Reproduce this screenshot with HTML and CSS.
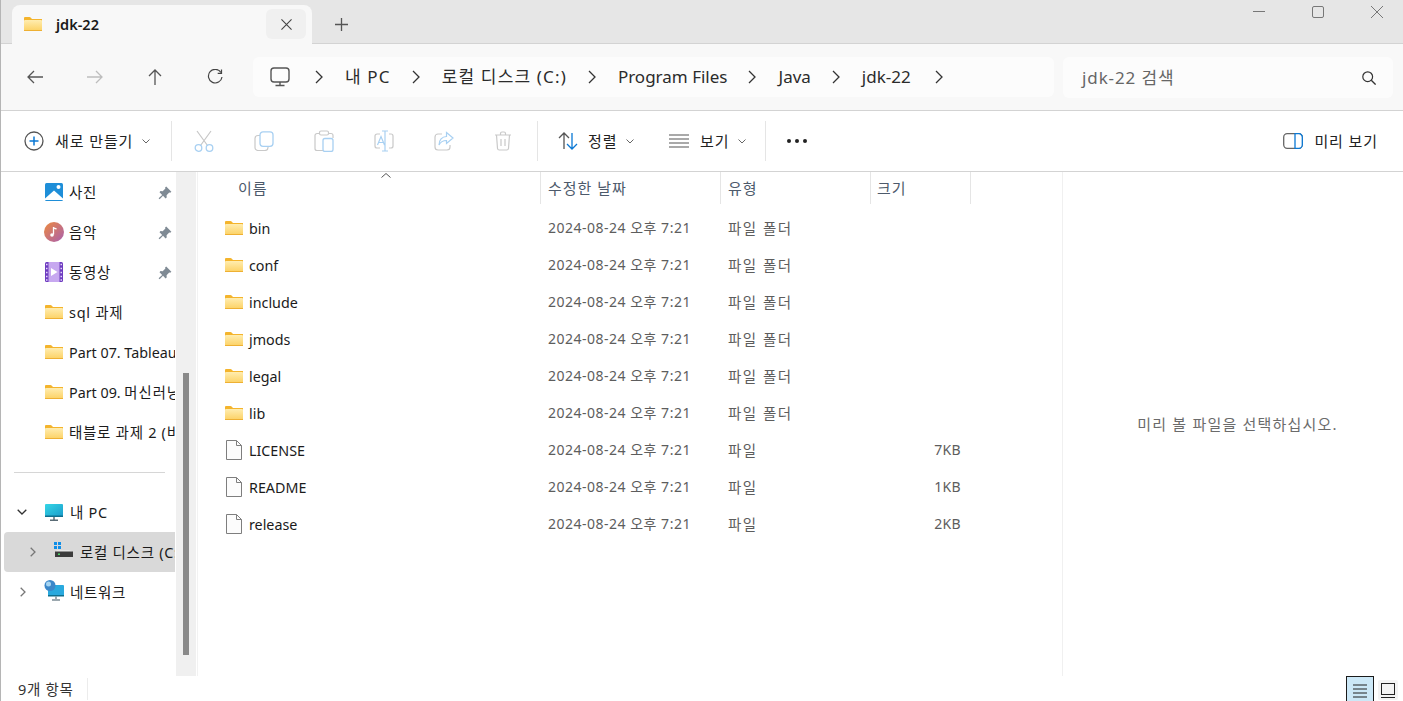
FILE: index.html
```html
<!DOCTYPE html>
<html lang="ko">
<head>
<meta charset="utf-8">
<title>jdk-22</title>
<link rel="stylesheet" href="styles.css">
</head>
<body>
<svg class="defs" width="0" height="0" aria-hidden="true">
  <defs>
    <linearGradient id="fg" x1="0" y1="0" x2="0" y2="1"><stop offset="0" stop-color="#ffedb0"/><stop offset="1" stop-color="#fcd163"/></linearGradient>
    <linearGradient id="pcg" x1="0" y1="0" x2="1" y2="1"><stop offset="0" stop-color="#35d6e6"/><stop offset="1" stop-color="#1a9ccb"/></linearGradient>
    <linearGradient id="mg" x1="0" y1="0" x2="1" y2="1"><stop offset="0" stop-color="#ed8a3e"/><stop offset="1" stop-color="#a95fb0"/></linearGradient>
    <symbol id="folder" viewBox="0 0 18 14">
      <path d="M0 1.200C0 .5.5 0 1.200 0h4.300c.5 0 .8.2 1.100.5L8 2h10v3H0z" fill="#f4b42c"/>
      <rect x="0" y="3" width="18" height="11" rx="1" fill="url(#fg)"/>
      <rect x="0" y="13" width="18" height="1" fill="#eeb033"/>
    </symbol>
    <symbol id="file" viewBox="0 0 16 20">
      <path d="M.5.5h10l5 5v14H.5z" fill="#fcfcfc" stroke="#7e7e7e"/>
      <path d="M10.500.5v5h5" fill="none" stroke="#7e7e7e"/>
    </symbol>
    <symbol id="pin" viewBox="0 0 14 14">
      <path d="M8.200.6l5.200 5.200-1.200 1-1-.3-2.600 2.700.1 2.200-1.100 1-2.600-2.700-3.400 3.600-1-1 3.600-3.400L1.500 6.200l1-1.100 2.200.1 2.700-2.600-.3-1z" fill="#7f8a94"/>
    </symbol>
    <symbol id="gt" viewBox="0 0 8 14">
      <path d="M1 1l6 6-6 6" fill="none" stroke="#333" stroke-width="1.300"/>
    </symbol>
    <symbol id="dn" viewBox="0 0 8 5">
      <path d="M.5.5L4 4 7.500.5" fill="none" stroke="#666" stroke-width="1"/>
    </symbol>
  </defs>
</svg>

<div class="window">
  <header class="titlebar">
    <div class="tab">
      <svg class="tab-folder"><use href="#folder"/></svg>
      <span class="tab-title">jdk-22</span>
      <span class="tab-close"><svg width="11" height="11" viewBox="0 0 12 12"><path d="M.5.5l11 11M11.500.5l-11 11" stroke="#444" stroke-width="1.200"/></svg></span>
    </div>
    <span class="tab-add"><svg width="13" height="13" viewBox="0 0 13 13"><path d="M6.500 0v13M0 6.500h13" stroke="#555" stroke-width="1.300"/></svg></span>
    <div class="winctl">
      <span class="winbtn"><svg width="12" height="12" viewBox="0 0 12 12"><path d="M0 5.500h12" stroke="#777" stroke-width="1"/></svg></span>
      <span class="winbtn"><svg width="12" height="12" viewBox="0 0 12 12"><rect x=".5" y=".5" width="11" height="11" rx="1.500" fill="none" stroke="#777"/></svg></span>
      <span class="winbtn"><svg width="12" height="12" viewBox="0 0 12 12"><path d="M0 0l12 12M12 0L0 12" stroke="#777" stroke-width="1"/></svg></span>
    </div>
  </header>

  <div class="addressbar">
    <div class="navbtns">
      <span class="navbtn"><svg width="16" height="14" viewBox="0 0 16 14"><path d="M16 7H1M7 1L1 7l6 6" fill="none" stroke="#555" stroke-width="1.300"/></svg></span>
      <span class="navbtn"><svg width="16" height="14" viewBox="0 0 16 14"><path d="M0 7h15M9 1l6 6-6 6" fill="none" stroke="#bdbdbd" stroke-width="1.300"/></svg></span>
      <span class="navbtn"><svg width="14" height="16" viewBox="0 0 14 16"><path d="M7 16V1M1 7l6-6 6 6" fill="none" stroke="#555" stroke-width="1.300"/></svg></span>
      <span class="navbtn"><svg width="16" height="16" viewBox="0 0 16 16"><path d="M14 3.500A6.800 6.800 0 1 0 15 8" fill="none" stroke="#444" stroke-width="1.200"/><path d="M14.500.5v3.800h-3.800" fill="none" stroke="#444" stroke-width="1.200"/></svg></span>
    </div>
    <nav class="crumbs">
      <svg class="pc" width="20" height="20" viewBox="0 0 20 20"><rect x="1" y="1" width="18" height="14" rx="3" fill="none" stroke="#555" stroke-width="1.400"/><path d="M10 15v3M5.500 18.500h9" stroke="#555" stroke-width="1.400" fill="none"/></svg>
      <svg class="gt"><use href="#gt"/></svg><span class="crumb crumb-ko">내 PC</span>
      <svg class="gt"><use href="#gt"/></svg><span class="crumb crumb-ko">로컬 디스크 (C:)</span>
      <svg class="gt"><use href="#gt"/></svg><span class="crumb">Program Files</span>
      <svg class="gt"><use href="#gt"/></svg><span class="crumb">Java</span>
      <svg class="gt"><use href="#gt"/></svg><span class="crumb crumb-last">jdk-22</span>
      <svg class="gt"><use href="#gt"/></svg>
    </nav>
    <div class="search">
      <span class="search-text">jdk-22 검색</span>
      <svg width="14" height="14" viewBox="0 0 14 14"><circle cx="5.700" cy="5.700" r="4.900" fill="none" stroke="#333" stroke-width="1.200"/><path d="M9.300 9.300l4.300 4.300" stroke="#333" stroke-width="1.300"/></svg>
    </div>
  </div>

  <div class="toolbar">
    <div class="tool tool-new">
      <svg width="20" height="20" viewBox="0 0 20 20"><circle cx="10" cy="10" r="9" fill="none" stroke="#555" stroke-width="1.300"/><path d="M10 5.500v9M5.500 10h9" stroke="#0a78d4" stroke-width="1.500"/></svg>
      <span>새로 만들기</span>
      <svg class="dn"><use href="#dn"/></svg>
    </div>
    <i class="sep"></i>
    <div class="tool-icons">
      <svg width="20" height="22" viewBox="0 0 20 22"><path d="M3 1l10.500 14.500M17 1L6.500 15.500" stroke="#c7c7c7" stroke-width="1.200" fill="none"/><circle cx="4.500" cy="18" r="3.300" fill="none" stroke="#a8d0f2" stroke-width="1.300"/><circle cx="15.500" cy="18" r="3.300" fill="none" stroke="#a8d0f2" stroke-width="1.300"/></svg>
      <svg width="20" height="20" viewBox="0 0 20 20"><rect x="1" y="4.500" width="13" height="15" rx="3" fill="none" stroke="#c9c9c9" stroke-width="1.200"/><rect x="6" y=".8" width="13" height="14.500" rx="3" fill="#fff" stroke="#a8d0f2" stroke-width="1.300"/></svg>
      <svg width="20" height="22" viewBox="0 0 20 22"><path d="M5 3.500H3A2 2 0 0 0 1 5.500v13a2 2 0 0 0 2 2h6M15 3.500h2a2 2 0 0 1 2 2V8" fill="none" stroke="#c9c9c9" stroke-width="1.200"/><rect x="5.500" y="1" width="9" height="4" rx="1.500" fill="#fff" stroke="#c9c9c9" stroke-width="1.200"/><rect x="9" y="8.500" width="10" height="13" rx="2" fill="#fff" stroke="#a8d0f2" stroke-width="1.300"/></svg>
      <svg width="20" height="22" viewBox="0 0 20 22"><path d="M6 4H3a2 2 0 0 0-2 2v10a2 2 0 0 0 2 2h3M15 4h2a2 2 0 0 1 2 2v10a2 2 0 0 1-2 2h-2" fill="none" stroke="#c9c9c9" stroke-width="1.200"/><path d="M11 1v20M8 1h6M8 21h6M3.500 15L7 6.500 10.500 15M4.800 12.500h4.500" fill="none" stroke="#a8d0f2" stroke-width="1.200"/></svg>
      <svg width="20" height="20" viewBox="0 0 20 20"><path d="M8 3H4a3 3 0 0 0-3 3v10a3 3 0 0 0 3 3h9a3 3 0 0 0 3-3v-2" fill="none" stroke="#c9c9c9" stroke-width="1.200"/><path d="M12.500 1.500L19 7l-6.500 5.500V9.500C9 9.500 6.500 11 5 14c0-5 3-8.500 7.500-8.500z" fill="#fff" stroke="#a8d0f2" stroke-width="1.200"/></svg>
      <svg width="18" height="20" viewBox="0 0 18 20"><path d="M1 4h16M6.500 4V2.500A1.500 1.500 0 0 1 8 1h2a1.500 1.500 0 0 1 1.500 1.500V4M2.500 4l1 13.500a1.800 1.800 0 0 0 1.800 1.500h7.400a1.800 1.800 0 0 0 1.800-1.500l1-13.500M7 8v7M11 8v7" fill="none" stroke="#c9c9c9" stroke-width="1.200"/></svg>
    </div>
    <i class="sep sep-b"></i>
    <div class="tool tool-sort">
      <svg width="20" height="18" viewBox="0 0 20 18"><path d="M6 17V1M1 6l5-5 5 5" fill="none" stroke="#555" stroke-width="1.300"/><path d="M14 1v16M9 12l5 5 5-5" fill="none" stroke="#0a78d4" stroke-width="1.300"/></svg>
      <span>정렬</span>
      <svg class="dn"><use href="#dn"/></svg>
    </div>
    <div class="tool tool-view">
      <svg width="20" height="14" viewBox="0 0 20 14"><path d="M0 1h20M0 5h20M0 9h20M0 13h20" stroke="#555" stroke-width="1.200"/></svg>
      <span>보기</span>
      <svg class="dn"><use href="#dn"/></svg>
    </div>
    <i class="sep sep-c"></i>
    <div class="tool-more"><b></b><b></b><b></b></div>
    <div class="tool tool-preview">
      <svg width="20" height="16" viewBox="0 0 20 16"><rect x=".7" y=".7" width="18.600" height="14.600" rx="3.500" fill="none" stroke="#666" stroke-width="1.300"/><path d="M12 .7h3.800a3.500 3.500 0 0 1 3.500 3.500v7.600a3.500 3.500 0 0 1-3.500 3.500H12z" fill="#fff" stroke="#0a78d4" stroke-width="1.300"/></svg>
      <span>미리 보기</span>
    </div>
  </div>

  <div class="main">
    <aside class="sidebar">
      <div class="tree">
        <div class="node indent">
          <svg class="nicon nicon-sq" viewBox="0 0 18 18"><rect width="18" height="18" rx="1.500" fill="#1e8ed8"/><path d="M0 15.500L9 7.500l9 8V17H0z" fill="#fff"/><circle cx="13.500" cy="4" r="2" fill="#fff"/></svg>
          <span class="nlabel">사진</span><svg class="pin"><use href="#pin"/></svg>
        </div>
        <div class="node indent">
          <svg class="nicon nicon-lg" viewBox="0 0 20 20"><circle cx="10" cy="10" r="10" fill="url(#mg)"/><path d="M9.500 5v7.500" stroke="#fff" stroke-width="1.300"/><path d="M9.500 5c1 .8 2 1 3 1v1.600c-1 0-2-.3-3-1z" fill="#fff"/><circle cx="8" cy="13" r="1.800" fill="#fff"/></svg>
          <span class="nlabel">음악</span><svg class="pin"><use href="#pin"/></svg>
        </div>
        <div class="node indent">
          <svg class="nicon nicon-vid" viewBox="0 0 18 20"><rect width="18" height="20" rx="1.500" fill="#6e3cc0"/><rect x="3.500" y="0" width="11" height="20" fill="#c7a8f0"/><path d="M6 6l6.500 4L6 14z" fill="#fff"/><path d="M1 2.500h1.500M1 6.500h1.500M1 10.500h1.500M1 14.500h1.500M1 18h1.500M15.500 2.500H17M15.500 6.500H17M15.500 10.500H17M15.500 14.500H17M15.500 18H17" stroke="#e6d9fa" stroke-width="1.500"/></svg>
          <span class="nlabel">동영상</span><svg class="pin"><use href="#pin"/></svg>
        </div>
        <div class="node indent"><svg class="nicon"><use href="#folder"/></svg><span class="nlabel">sql 과제</span></div>
        <div class="node indent"><svg class="nicon"><use href="#folder"/></svg><span class="nlabel nlabel-latin">Part 07. Tableau <span class="ko">실습</span></span></div>
        <div class="node indent"><svg class="nicon"><use href="#folder"/></svg><span class="nlabel nlabel-latin">Part 09. <span class="ko">머신러닝 실습</span></span></div>
        <div class="node indent"><svg class="nicon"><use href="#folder"/></svg><span class="nlabel">태블로 과제 2 (비즈니스)</span></div>
        <div class="tree-sep"></div>
        <div class="node">
          <svg class="chev-open" viewBox="0 0 10 6"><path d="M.7.7L5 5 9.300.7" fill="none" stroke="#333" stroke-width="1.300"/></svg>
          <svg class="nicon-pc" viewBox="0 0 18 17"><rect width="18" height="12.500" rx="1" fill="url(#pcg)"/><rect y="11.500" width="18" height="1.500" fill="#0f6f8e"/><path d="M9 13v2.500M5 16.300h8" stroke="#5a6b75" stroke-width="1.500"/></svg>
          <span class="nlabel">내 PC</span>
        </div>
        <div class="node node-sel">
          <svg class="chev" viewBox="0 0 6 10"><path d="M.7.7L5 5 .7 9.300" fill="none" stroke="#777" stroke-width="1.300"/></svg>
          <svg class="nicon-drive" viewBox="0 0 19 15"><path d="M0 0h3v3H0zM4 0h3v3H4zM0 4h3v3H0zM4 4h3v3H4z" fill="#0f8ee8"/><path d="M2 9l1-1h12l3 1.500V15H2z" fill="#e8e8e8"/><rect x="1" y="9.500" width="18" height="5.500" fill="#3c3c3c"/><rect x="4" y="11.500" width="2" height="1.500" fill="#4fd86a"/></svg>
          <span class="nlabel">로컬 디스크 (C:)</span>
        </div>
        <div class="node">
          <svg class="chev" viewBox="0 0 6 10"><path d="M.7.7L5 5 .7 9.300" fill="none" stroke="#777" stroke-width="1.300"/></svg>
          <svg class="nicon-net" viewBox="0 0 21 21"><rect x="4" y="5" width="16" height="11" rx="1" fill="#29a9de"/><rect x="4" y="15" width="16" height="1.500" fill="#0f6f8e"/><path d="M12 16.500v2.500M8 20h8" stroke="#7c8c95" stroke-width="1.500"/><circle cx="6" cy="5.500" r="5.500" fill="#3b87c9"/><circle cx="4.500" cy="4" r="2.500" fill="#a5d4f2"/></svg>
          <span class="nlabel">네트워크</span>
        </div>
      </div>
      <div class="scroll"><div class="thumb"></div></div>
    </aside>

    <section class="files">
      <div class="cols">
        <span class="col col-name">이름<svg class="sort-up" width="10" height="5" viewBox="0 0 10 5"><path d="M.5 4.500L5 .5l4.500 4" fill="none" stroke="#555"/></svg></span>
        <span class="col col-date">수정한 날짜</span>
        <span class="col col-type">유형</span>
        <span class="col col-size">크기</span>
      </div>
      <div class="rows">
        <div class="row"><svg class="ficon"><use href="#folder"/></svg><span class="fname">bin</span><span class="fdate">2024-08-24 오후 7:21</span><span class="ftype">파일 폴더</span><span class="fsize"></span></div>
        <div class="row"><svg class="ficon"><use href="#folder"/></svg><span class="fname">conf</span><span class="fdate">2024-08-24 오후 7:21</span><span class="ftype">파일 폴더</span><span class="fsize"></span></div>
        <div class="row"><svg class="ficon"><use href="#folder"/></svg><span class="fname">include</span><span class="fdate">2024-08-24 오후 7:21</span><span class="ftype">파일 폴더</span><span class="fsize"></span></div>
        <div class="row"><svg class="ficon"><use href="#folder"/></svg><span class="fname">jmods</span><span class="fdate">2024-08-24 오후 7:21</span><span class="ftype">파일 폴더</span><span class="fsize"></span></div>
        <div class="row"><svg class="ficon"><use href="#folder"/></svg><span class="fname">legal</span><span class="fdate">2024-08-24 오후 7:21</span><span class="ftype">파일 폴더</span><span class="fsize"></span></div>
        <div class="row"><svg class="ficon"><use href="#folder"/></svg><span class="fname">lib</span><span class="fdate">2024-08-24 오후 7:21</span><span class="ftype">파일 폴더</span><span class="fsize"></span></div>
        <div class="row"><svg class="ficon ficon-file"><use href="#file"/></svg><span class="fname">LICENSE</span><span class="fdate">2024-08-24 오후 7:21</span><span class="ftype">파일</span><span class="fsize">7KB</span></div>
        <div class="row"><svg class="ficon ficon-file"><use href="#file"/></svg><span class="fname">README</span><span class="fdate">2024-08-24 오후 7:21</span><span class="ftype">파일</span><span class="fsize">1KB</span></div>
        <div class="row"><svg class="ficon ficon-file"><use href="#file"/></svg><span class="fname">release</span><span class="fdate">2024-08-24 오후 7:21</span><span class="ftype">파일</span><span class="fsize">2KB</span></div>
      </div>
    </section>

    <aside class="preview">미리 볼 파일을 선택하십시오.</aside>
  </div>

  <footer class="status">
    <span class="count">9개 항목</span>
    <div class="views">
      <span class="view view-on"><svg width="14" height="14" viewBox="0 0 14 14"><path d="M0 1h14M0 5h14M0 9h14M0 13h14" stroke="#222" stroke-width="1"/></svg></span>
      <span class="view view-alt"><svg width="14" height="15" viewBox="0 0 14 15"><rect x=".5" y=".5" width="13" height="11" fill="none" stroke="#222"/><path d="M0 14.500h14" stroke="#222"/></svg></span>
    </div>
  </footer>
</div>
</body>
</html>
```

FILE: styles.css
```css
* { box-sizing: border-box; }
html, body { margin: 0; padding: 0; }
body {
  width: 1403px;
  height: 701px;
  overflow: hidden;
  font-family: "Noto Sans", "Noto Sans CJK KR", sans-serif;
  font-size: 14px;
  color: #1b1b1b;
  background: #fff;
}
svg { display: block; flex: none; }
.defs { position: absolute; }
.window {
  width: 1403px;
  height: 701px;
  display: flex;
  flex-direction: column;
  border-left: 1px solid #b5b5b5;
}

/* title bar */
.titlebar {
  height: 44px;
  flex: none;
  display: flex;
  background: #e6e6e6;
  border-bottom: 1px solid #d3d3d3;
  padding-left: 11px;
}
.tab {
  width: 300px;
  height: 39px;
  margin-top: 5px;
  background: #f8f8f8;
  border-radius: 8px 8px 0 0;
  display: flex;
  align-items: center;
  padding: 0 6px 0 12px;
  margin-bottom: -1px;
}
.tab-folder { width: 18px; height: 14px; margin-top: -1px; }
.tab-title { margin-left: 14px; font-size: 14.5px; font-weight: 600; margin-top: -2px; color: #1a1a1a; }
.tab-close {
  margin-left: auto;
  width: 40px;
  height: 30px;
  margin-top: -1px;
  border-radius: 6px;
  background: #f0f0f0;
  display: flex;
  align-items: center;
  justify-content: center;
}
.tab-add { width: 58px; display: flex; align-items: center; justify-content: center; padding-top: 5px; }
.winctl { margin-left: auto; display: flex; margin-right: -3px; }
.winbtn { width: 59px; height: 24px; display: flex; align-items: center; justify-content: center; }

/* address bar */
.addressbar {
  height: 67px;
  flex: none;
  display: flex;
  background: #f8f8f8;
  border-bottom: 1px solid #d3d3d3;
  padding: 13px 10px 13px 0;
}
.navbtns { width: 252px; flex: none; display: flex; padding-left: 4px; }
.navbtn { width: 60px; display: flex; align-items: center; justify-content: center; }
.crumbs {
  width: 801px;
  flex: none;
  display: flex;
  align-items: center;
  background: #fcfcfc;
  border-radius: 6px;
  padding-left: 17px;
  font-size: 17px;
  color: #2b2b2b;
}
.pc { margin-right: 25px; }
.gt { width: 8px; height: 14px; }
.crumb { margin: -1px 21px 0 22px; white-space: nowrap; line-height: 24px; }
.crumb-ko { letter-spacing: 1.150px; }
.crumb-last { margin-right: 24px; }
.search {
  width: 330px;
  height: 41px;
  margin-left: 9px;
  flex: none;
  display: flex;
  align-items: center;
  justify-content: space-between;
  background: #fcfcfc;
  border-radius: 6px;
  padding: 0 17px 0 19px;
}
.search-text { font-size: 17px; letter-spacing: .9px; color: #666; margin-top: -2px; }

/* command bar */
.toolbar {
  height: 61px;
  flex: none;
  display: flex;
  align-items: center;
  border-bottom: 1px solid #d3d3d3;
  padding-left: 23px;
}
.tool { display: flex; align-items: center; white-space: nowrap; color: #222; }
.tool span { font-size: 15px; letter-spacing: .9px; margin-top: -1px; }
.tool-new { width: 147px; }
.tool-new span { margin-left: 11px; }
.dn { width: 8px; height: 5px; margin-left: 9px; margin-top: 1px; }
.sep { width: 1px; height: 40px; background: #e5e5e5; flex: none; }
.tool-icons {
  width: 364px;
  flex: none;
  padding-left: 22px;
  display: flex;
  justify-content: space-between;
  padding-right: 24px;
  align-items: center;
}
.sep-b { margin-left: 1px; }
.tool-sort { margin-left: 20px; width: 111px; }
.tool-sort span { margin-left: 10px; }
.tool-view { width: 96px; }
.tool-view span { margin-left: 11px; }
.tool-more { margin-left: 21px; display: flex; gap: 4px; }
.tool-more b { width: 4px; height: 4px; border-radius: 50%; background: #222; }
.tool-preview { margin-left: auto; margin-right: 25px; }
.tool-preview span { margin-left: 11px; }

/* main area */
.main { flex: 1; min-height: 0; display: flex; }
.sidebar { width: 196px; flex: none; display: flex; }
.tree { width: 174px; flex: none; overflow: hidden; }
.node {
  height: 40px;
  display: flex;
  align-items: center;
  white-space: nowrap;
  padding-left: 17px;
  position: relative;
  color: #1b1b1b;
}
.node.indent { padding-left: 44px; }
.nicon { width: 18px; height: 14px; margin-right: 6px; }
.nicon-sq { height: 18px; }
.nicon-vid { height: 20px; }
.nicon-lg { width: 20px; height: 20px; margin-left: -1px; margin-right: 5px; }
.nlabel { margin-top: -1px; font-size: 14.5px; letter-spacing: .7px; }
.nlabel-latin { font-size: 14.3px; letter-spacing: 0; }
.ko { letter-spacing: 1px; }
.pin { width: 14px; height: 14px; position: absolute; left: 157px; top: 14px; }
.tree-sep { height: 40px; display: flex; align-items: center; padding-left: 13px; }
.tree-sep::before { content: ""; width: 151px; height: 1px; background: #d6d6d6; }
.chev { width: 6px; height: 10px; margin-left: 2px; margin-right: 18px; }
.chev-open { width: 10px; height: 6px; margin-left: -1px; margin-right: 18px; }
.nicon-pc { width: 18px; height: 17px; margin-right: 7px; }
.node-sel { background: #d9d9d9; margin-left: 3px; border-radius: 4px 0 0 4px; padding-left: 24px; }
.nicon-drive { width: 19px; height: 15px; margin: -5px 7px 0 0; }
.nicon-net { width: 21px; height: 21px; margin: -3px 5px 0 0; }
.scroll { width: 20px; margin-left: 1px; background: #f0f0f0; padding: 201px 0 21px 7px; }
.thumb { width: 6px; height: 100%; background: #8a8a8a; }

/* file list */
.files { width: 865px; flex: none; border-left: 1px solid #f2f2f2; }
.cols { height: 32px; display: flex; color: #4d5a6b; font-size: 15px; letter-spacing: 1px; }
.col { border-right: 1px solid #e5e5e5; padding-top: 4px; position: relative; line-height: 24px; }
.col-name { width: 343px; padding-left: 40px; }
.col-date { width: 180px; padding-left: 7px; }
.col-type { width: 150px; padding-left: 7px; }
.col-size { width: 100px; padding-left: 6px; }
.sort-up { position: absolute; left: 183px; top: 1px; }
.rows { padding-top: 6px; }
.row { height: 37px; display: flex; align-items: center; white-space: nowrap; }
.ficon { width: 18px; height: 14px; margin-left: 27px; margin-right: 6px; margin-top: -2px; }
.ficon-file { width: 16px; height: 20px; margin-left: 28px; margin-right: 7px; margin-top: -1px; }
.fname { width: 299px; color: #1b1b1b; margin-top: -1px; font-size: 14.3px; }
.fdate { width: 180px; color: #5d5d5d; font-size: 14px; letter-spacing: .5px; margin-top: -3px; }
.ftype { width: 150px; color: #5d5d5d; font-size: 14.5px; letter-spacing: 1.500px; margin-top: -3px; }
.fsize { width: 83px; text-align: right; color: #5d5d5d; font-size: 14px; letter-spacing: .3px; margin-top: -2px; }

/* preview */
.preview {
  flex: 1;
  border-left: 1px solid #f0f0f0;
  display: flex;
  align-items: center;
  justify-content: center;
  color: #6b6b6b;
  font-size: 15px;
  letter-spacing: 1.200px;
  padding: 0 0 2px 9px;
}

/* status */
.status { height: 25px; flex: none; display: flex; padding-left: 17px; overflow: hidden; }
.count { font-size: 14.5px; letter-spacing: .7px; width: 70px; border-right: 1px solid #ececec; height: 22px; margin-top: 2px; line-height: 22px; color: #333; }
.views { margin-left: auto; display: flex; padding-right: 5px; gap: 4px; }
.view { display: flex; align-items: center; justify-content: center; }
.view-on { width: 28px; height: 28px; border: 1px solid #1b1b1b; background: #cce8f7; padding-top: 2px; }
.view-alt { width: 20px; height: 20px; margin-top: 4px; background: #f3f3f3; border-radius: 2px; }
```
